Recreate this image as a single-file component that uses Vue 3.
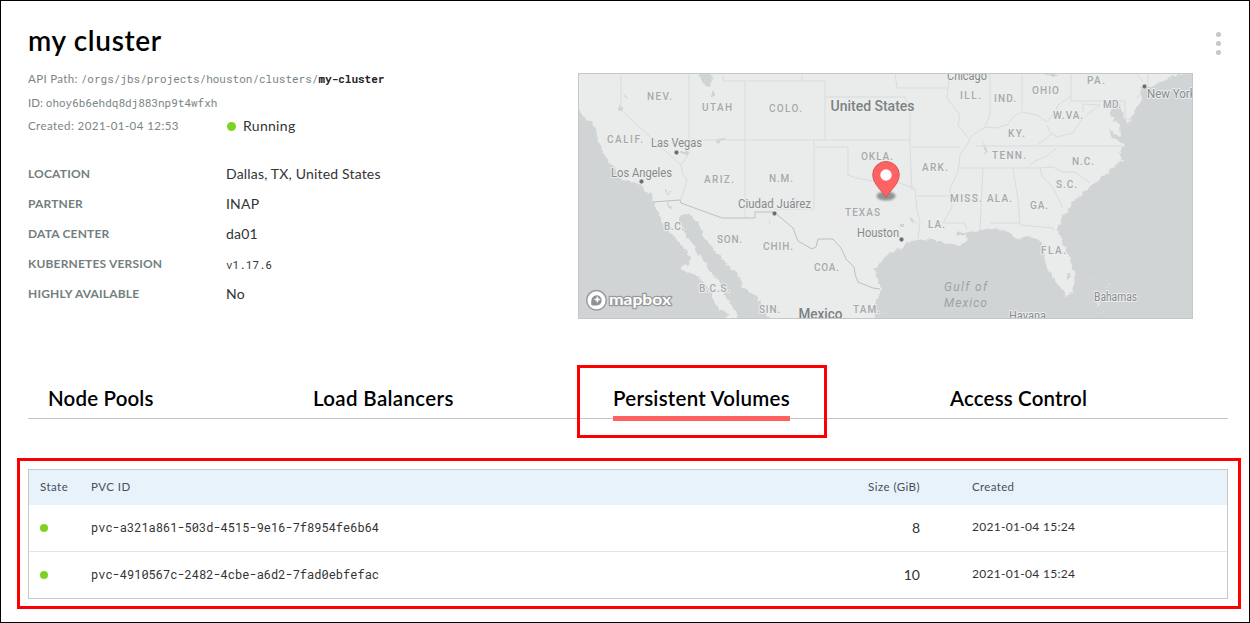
<script setup>
const details = [
  { label: 'LOCATION', value: 'Dallas, TX, United States', cls: 'v-loc' },
  { label: 'PARTNER', value: 'INAP', cls: 'v-partner' },
  { label: 'DATA CENTER', value: 'da01', cls: 'v-dc' },
  { label: 'KUBERNETES VERSION', value: 'v1.17.6', cls: 'mono small' },
  { label: 'HIGHLY AVAILABLE', value: 'No', cls: 'v-ha' }
]

const volumes = [
  { id: 'pvc-a321a861-503d-4515-9e16-7f8954fe6b64', size: 8, created: '2021-01-04 15:24' },
  { id: 'pvc-4910567c-2482-4cbe-a6d2-7fad0ebfefac', size: 10, created: '2021-01-04 15:24' }
]

// [text, x, baseline, width]
const regions = [
  ['NEV.', 647, 99.5, 25], ['UTAH', 702, 111, 30], ['COLO.', 769, 112, 33], ['CALIF.', 607, 143, 36],
  ['ARIZ.', 704, 183, 30], ['N.M.', 769, 181.5, 24], ['OKLA.', 861, 159.5, 32], ['ILL.', 960, 98.5, 21],
  ['IND.', 994, 102, 22], ['OHIO', 1032, 94, 27], ['PA.', 1087, 84, 18], ['MD.', 1103, 108, 18],
  ['W.VA.', 1053, 119, 30], ['KY.', 1008, 136.5, 17], ['TENN.', 992, 158.5, 34], ['ARK.', 922, 171, 26],
  ['N.C.', 1072, 164.5, 22], ['S.C.', 1056, 187.5, 21], ['MISS.', 950, 201.5, 32], ['ALA.', 987, 202, 25],
  ['GA.', 1030, 209, 18], ['LA.', 928, 227.5, 17], ['FLA.', 1041, 254, 25], ['TEXAS', 845, 216, 35],
  ['B.C.', 664, 229.5, 20], ['SON.', 717, 243, 25], ['CHIH.', 763, 249.5, 30], ['COA.', 814, 270.5, 25],
  ['B.C.S.', 699, 291.5, 31], ['SIN.', 759, 312.5, 21], ['TAM.', 853, 312.5, 27]
]
const cities = [
  ['Las Vegas', 651, 147, 51], ['Los Angeles', 611, 176.5, 61], ['Chicago', 947, 80, 40],
  ['New York', 1147, 97.5, 48.5], ['Houston', 857, 236.5, 42], ['Ciudad Juárez', 738, 208, 73],
  ['Bahamas', 1094, 301, 43], ['Havana', 1009, 319.5, 37]
]
const countries = [['United States', 830.5, 111, 84], ['Mexico', 798.5, 318.5, 44]]
const dots = [[676.5, 152.5], [641.5, 181.5], [1144.5, 86.5], [901.5, 239.5], [774.5, 213.5]]
</script>

<template>
  <main class="page">
    <header class="top">
      <section class="info">
        <h1>my cluster</h1>
        <p class="meta"><span class="api">API Path:</span> <span class="mono">/orgs/jbs/projects/houston/clusters/<b>my-cluster</b></span></p>
        <p class="meta"><span class="idl">ID:</span> <span class="mono">ohoy6b6ehdq8dj883np9t4wfxh</span></p>
        <div class="status-row">
          <p class="meta created">Created: 2021-01-04 12:53</p>
          <span class="dot big"></span>
          <span class="running">Running</span>
        </div>
        <dl>
          <div v-for="d in details" :key="d.label" class="row">
            <dt>{{ d.label }}</dt>
            <dd :class="d.cls">{{ d.value }}</dd>
          </div>
        </dl>
      </section>

      <svg class="map" viewBox="578 73 615 246" width="615" height="246">
        <defs>
          <filter id="coast" x="-5%" y="-5%" width="110%" height="110%">
            <feTurbulence type="fractalNoise" baseFrequency="0.18" numOctaves="2" seed="4" result="n" />
            <feDisplacementMap in="SourceGraphic" in2="n" scale="6" xChannelSelector="R" yChannelSelector="G" />
          </filter>
          <filter id="soft"><feGaussianBlur stdDeviation="1.2" /></filter>
        </defs>
        <rect x="578" y="73" width="615" height="246" fill="#d0d4d5" />
        <g filter="url(#coast)">
          <path fill="#eaecec" d="M560 60 V100 L578 110 588 120 594 125 597 137 603 153 613 168 623 180 637 183 645 190 652 195 655 207 665 227 677 240 688 252 690 265 680 266 685 272 700 278 707 287 713 293 713 302 727 315 731 330 739 330 737 315 730 303 722 293 720 282 710 272 703 260 693 245 685 233 680 222 680 215 688 214 698 222 705 240 717 253 727 265 737 273 743 287 757 297 763 308 775 330 H875 V303 L882 288 877 278 875 270 885 257 890 253 902 248 907 242 922 239 935 240 947 243 960 246 968 240 963 233 980 230 993 228 1007 231 1017 239 1030 235 1040 243 1045 255 1047 268 1057 283 1067 296 1073 293 1075 277 1070 260 1062 240 1058 228 1062 217 1073 202 1087 190 1100 178 1113 168 1123 160 1118 152 1125 145 1113 137 1108 128 1121 137 1120 125 1110 115 1112 105 1118 101 1122 112 1127 123 1132 117 1137 107 1143 97 1140 88 1148 87 1160 82 1170 77 1200 70 V60Z" />
          <g fill="#d0d4d5">
            <path d="M699 73h12l1 8-4 6-5-3-3-5z M712 92h3v5h-3z M618 107h4v5h-4z M624 93l4 6h-2l-3-5z M717 139l8-1-1 3-8 2z M681 152h8v2h-7z M665 189l6 4-2 2-4-4z M957 232h7v4h-7z M1066 272h3l1 6-3 1z M911 217l5 5-2 1-4-3z M899 223h6v4h-5z M1041 73h18l-5 3h-8z M983 140l4 9-1 6-2-5z M668 201l4 6-2 1-3-4z M768 219l3 3-1 1z" />
          </g>
        </g>
        <g class="borders">
          <path d="M621 73V110L681 165 683 175 687 179 684 190 680 201 M689 73V153L681 165 M689 140H910 M745 81V218 M723 73V81H825V140 M802 73V81 M825 97H905L910 108V147H960 M814 140V209H775 M814 147H848V175L856 178 872 181 878 180 890 184 900 183 915 189 917 210 920 222 918 238 M910 147L912 190 M895 73 897 88H947 M950 73 948 88 947 98 960 115 958 125 970 140 960 155 958 172 950 188 952 207 943 223H965L967 230 M917 196H952 M990 73V115L985 127 970 137 M1022 73V110 M985 127 996 128 1007 125 1015 115 1022 112 1037 115 1047 122 1055 112 1058 105 1070 97 M1071 73V101H1125 M1125 101V119H1132 M1047 125 1050 132 1057 137 1073 133 1080 122 1087 115 1100 105 1083 104 V112 M975 146H1122 M1037 145 1053 133 M960 168H1040 M1028 167 1035 161 1045 157 1057 148 M1040 168 1042 176 1053 188 1063 208 M1040 168 1053 167 1063 172H1075L1090 183 M983 168 980 230 M1013 168 1018 200 1020 225 1053 228 V231 M990 223H1020 M1148 73V84L1137 98 M1136 73 1143 82" />
        </g>
        <path class="national" d="M653 202 680 200 681 203 722 218H755V212H774L793 228 798 241 812 249 816 247 818 239 833 239 841 248 846 259 854 267 855 274 858 282 873 288 880 289" />
        <g class="islands"><path d="M1097 304h4M1098 301v6M1109 283v2M1107 287v1M1093 279h1M1103 312h1M640 248h1" /></g>

        <g class="lbl region">
          <text v-for="r in regions" :key="r[0]" :x="r[1]" :y="r[2]" :textLength="r[3]">{{ r[0] }}</text>
        </g>
        <g class="lbl city">
          <text v-for="c in cities" :key="c[0]" :x="c[1]" :y="c[2]" :textLength="c[3]" lengthAdjust="spacingAndGlyphs">{{ c[0] }}</text>
        </g>
        <g class="lbl country">
          <text v-for="c in countries" :key="c[0]" :x="c[1]" :y="c[2]" :textLength="c[3]" lengthAdjust="spacingAndGlyphs">{{ c[0] }}</text>
        </g>
        <g class="gulf">
          <text x="944" y="291" textLength="43">Gulf of</text>
          <text x="944" y="307" textLength="43">Mexico</text>
        </g>
        <circle v-for="p in dots" :key="p[0]" :cx="p[0]" :cy="p[1]" r="2.4" class="city-dot" />

        <ellipse cx="886" cy="196" rx="9.5" ry="4.5" fill="#555" opacity=".6" filter="url(#soft)" />
        <path d="M886 197.500C882 190.500 872.700 184 872.700 174.700A13.300 13.300 0 0 1 899.300 174.700C899.300 184 890 190.500 886 197.500Z" fill="#ff6262" stroke="#c94f52" stroke-width=".8" />
        <circle cx="886" cy="175" r="5.7" fill="#fff" />

        <g class="mapbox">
          <circle cx="596.500" cy="300.300" r="9.800" fill="#fff" stroke="#979b9c" stroke-width="1.500" />
          <path d="M591.500 305.300C590.700 301 591.400 298.400 592.900 296.900A5 5 0 1 1 600.300 303.900C598.500 305.500 595.500 306 591.500 305.300Z" fill="#8e9293" />
          <path d="M597.300 296.500l.9 2.100 2.100.9-2.100.9-.9 2.100-.9-2.100-2.100-.9 2.100-.9z" fill="#fff" stroke="#fff" stroke-width=".5" />
          <text x="609" y="305.300" textLength="62" lengthAdjust="spacingAndGlyphs">mapbox</text>
        </g>
        <rect x="578.500" y="73.500" width="614" height="245" fill="none" stroke="#c3c9c9" />
      </svg>

      <button class="menu" aria-label="More"><i></i><i></i><i></i></button>
    </header>

    <nav class="tabs">
      <div class="tab"><span class="t1">Node Pools</span></div>
      <div class="tab"><span class="t2">Load Balancers</span></div>
      <div class="tab current"><span class="t3">Persistent Volumes</span></div>
      <div class="tab"><span class="t4">Access Control</span></div>
    </nav>

    <section class="callout">
      <div class="table">
        <div class="tr head">
          <span class="h-state">State</span><span class="h-id">PVC ID</span><span class="num h-size">Size (GiB)</span><span class="date h-created">Created</span>
        </div>
        <div v-for="v in volumes" :key="v.id" class="tr">
          <span><i class="dot"></i></span>
          <span class="mono pvc">{{ v.id }}</span>
          <span class="num">{{ v.size }}</span>
          <span class="date">{{ v.created }}</span>
        </div>
      </div>
    </section>
  </main>
</template>

<style>
body { background: #fff; }
</style>

<style scoped>
* { box-sizing: border-box; }
.page {
  width: 1250px; height: 623px; border: 1px solid #000; background: #fff;
  font-family: Lato, "Open Sans", sans-serif; color: #333; overflow: hidden;
}
.top { display: flex; height: 364px; padding-left: 27px; }
.info { width: 550px; padding-top: 21px; }
h1 { margin: 0; font-size: 28px; line-height: 36px; font-weight: 600; color: #000; letter-spacing: .65px; }
.meta { margin: 0; font-size: 11.500px; line-height: 24px; height: 24px; color: #7a8485; letter-spacing: 0; white-space: nowrap; }
h1 + .meta { margin-top: 9px; }
.api { letter-spacing: .35px; }
.mono { font-family: "Roboto Mono", "Liberation Mono", monospace; font-size: 11px; letter-spacing: 0; }
.meta b { color: #222; }
.status-row { display: flex; align-items: center; height: 23px; }
.created { width: 199px; height: 23px; line-height: 22px; letter-spacing: .43px; }
.dot { display: block; width: 8px; height: 8px; border-radius: 50%; background: #7ed321; }
.dot.big { width: 9px; height: 9px; }
.running { margin: -2px 0 0 7px; font-size: 14px; letter-spacing: .3px; }
dl { margin: 20px 0 0; }
.row { display: flex; height: 30.200px; align-items: center; }
dt { width: 198px; font-size: 12px; font-weight: 700; color: #737e80; letter-spacing: .18px; }
dd { margin: 0; font-size: 14px; color: #333; letter-spacing: .18px; }
dd.small { font-size: 11px; padding-top: 2px; letter-spacing: 0; }
.map { display: block; margin-top: 72px; flex: none; }
.menu {
  margin: 31px 0 0 22px; padding: 0; width: 7px; height: 23px; border: 0; background: none;
  display: flex; flex-direction: column; justify-content: space-between; align-items: center;
}
.menu i { width: 5px; height: 5px; border-radius: 50%; background: #c3c8c9; }

.borders { fill: none; stroke: #d9dcdc; stroke-width: 1; }
.national { fill: none; stroke: #bcc0c1; stroke-width: 1; }
.islands { stroke: #e9ebeb; stroke-width: 1; }
.lbl text { paint-order: stroke; stroke: #eceeee; stroke-width: 2px; stroke-linejoin: round; font-family: Roboto, sans-serif; }
.region text { font-size: 10px; font-weight: 500; fill: #a5a9aa; }
.city text { font-size: 12.500px; fill: #858b8c; }
.country text { font-size: 14px; font-weight: 500; fill: #7a8283; }
.gulf text { font: italic 400 12px Roboto, sans-serif; fill: #9ea3a5; }
.city-dot { fill: #66706f; stroke: #eceeee; stroke-width: .6; }
.mapbox text { font: 700 16px Lato, sans-serif; fill: #fff; stroke: #979b9c; stroke-width: 2.500px; paint-order: stroke; stroke-linejoin: round; }

.tabs { position: relative; display: flex; height: 73px; margin: 0 21px 0 27px; }
.tabs::before { content: ""; position: absolute; left: 0; right: 0; top: 53px; height: 1px; background: #c4c8c8; }
.tab { height: 73px; padding: 17px 0 0 20px; width: 265px; }
.tab:nth-child(2) { width: 284px; }
.tab.current { position: relative; width: 250px; padding: 14px 0 0 33px; border: 3px solid #f00; }
.tab:last-child { padding-left: 123px; }
.tab span { display: inline-block; height: 39px; line-height: 32px; font-size: 20.500px; font-weight: 600; color: #000; white-space: nowrap; letter-spacing: .16px; }
.tab .t2 { letter-spacing: .34px; }
.tab .t3 { letter-spacing: .25px; }
.current span { width: 177px; border-bottom: 5px solid #ff6060; }

.callout { width: 1224px; height: 151px; margin: 20px 0 0 16px; border: 3px solid #f00; padding: 8px; }
.table { width: 1200px; height: 130px; border: 1px solid #c6caca; }
.tr { display: grid; grid-template-columns: 51px 701px 128px 1fr; height: 47px; align-items: center; padding-left: 11px; padding-bottom: 2px; font-size: 14px; }
.tr .dot { margin-top: 1px; }
.tr + .tr { border-bottom: 1px solid #e2e5e5; }
.tr:last-child { border-bottom: 0; padding-bottom: 3px; }
.head { height: 35px; background: #e8f2fb; font-size: 11.500px; color: #4a4d5c; letter-spacing: .45px; }
.num { text-align: right; }
.date { padding: 0 0 1px 52px; font-size: 12px; letter-spacing: .3px; }
.head .date { padding-bottom: 0; font-size: 11.500px; letter-spacing: .35px; }
.pvc { font-size: 12px; }
</style>
